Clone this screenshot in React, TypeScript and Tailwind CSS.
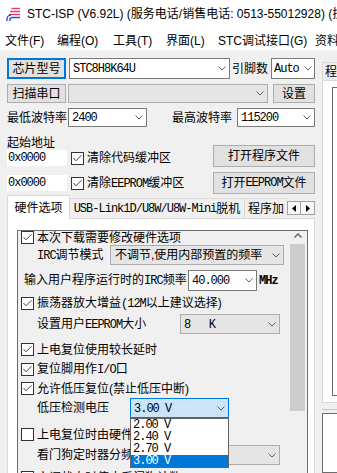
import type { ReactNode } from "react";

const SANS = "font-['Liberation_Sans','Noto_Sans_CJK_SC',sans-serif]";

// SimSun-looking latin runs (bitmap mono in the original)
function M({ children }: { children: ReactNode }) {
  return (
    <span className="font-['Liberation_Mono',monospace] text-[12px] tracking-[-1px] whitespace-pre">
      {children}
    </span>
  );
}

function Chevron({ up }: { up?: boolean }) {
  return (
    <svg width="8" height="5" viewBox="0 0 8 5" className="shrink-0">
      <polyline
        points={up ? "0.5,4.5 4,1 7.5,4.5" : "0.5,0.5 4,4 7.5,0.5"}
        fill="none"
        stroke="#606060"
        strokeWidth={up ? 1.4 : 1}
      />
    </svg>
  );
}

function Check({ on }: { on?: boolean }) {
  return (
    <span className="w-[13px] h-[13px] border border-[#333333] bg-white flex items-center justify-center shrink-0">
      {on && (
        <svg width="11" height="11" viewBox="0 0 11 11">
          <polyline points="1.5,5 4,7.8 9.5,2.2" fill="none" stroke="#444444" strokeWidth="1" />
        </svg>
      )}
    </span>
  );
}

function Button({ className, children }: { className: string; children: ReactNode }) {
  return (
    <div className={`flex items-center justify-center whitespace-nowrap bg-[#e1e1e1] ${className}`}>
      {children}
    </div>
  );
}

type Tone = "edit" | "list" | "focus";

function Combo({
  className,
  tone,
  narrow,
  children,
}: {
  className: string;
  tone: Tone;
  narrow?: boolean;
  children?: ReactNode;
}) {
  const look =
    tone === "edit"
      ? "bg-white border-[#7a7a7a]"
      : tone === "focus"
        ? "bg-[#cce4f7] border-[#0078d7]"
        : "bg-[#e5e5e5] border-[#adadad]";
  return (
    <div className={`relative flex items-center border shrink-0 ${look} ${className}`}>
      <div className={`flex-1 whitespace-nowrap overflow-hidden leading-none ${narrow ? "pl-[2px]" : "pl-[3px]"}`}>
        {children}
      </div>
      <div className={`flex justify-center shrink-0 ${narrow ? "w-[12px]" : "w-[15px]"}`}>
        <Chevron />
      </div>
    </div>
  );
}

function CheckRow({ on, className, children }: { on?: boolean; className: string; children: ReactNode }) {
  return (
    <div className={`h-[13px] flex items-center pl-[3px] whitespace-nowrap ${className}`}>
      <Check on={on} />
      <span className="ml-[3px] leading-none">{children}</span>
    </div>
  );
}

function Logo() {
  return (
    <svg width="16" height="16" viewBox="0 0 16 16" className="shrink-0">
      <g stroke="#e8356d" strokeWidth="1.4" fill="none">
        <path d="M6.5 2.5h8.5" />
        <path d="M5 5.5h10" />
        <path d="M4 8.5h11" />
      </g>
      <g stroke="#2b4fd1" strokeWidth="1.4" fill="none">
        <path d="M2 15v-2a4 4 0 0 1 4-4" />
        <path d="M5 15v-1.5a2 2 0 0 1 2-2h8" />
      </g>
    </svg>
  );
}

function TitleBar() {
  return (
    <div className="h-[28px] bg-white flex items-center pl-[5px] whitespace-nowrap overflow-hidden">
      <Logo />
      <span className="ml-[6px] leading-[16px]">
        STC-ISP (V6.92L) (服务电话/销售电话: 0513-55012928) (技术支持
      </span>
    </div>
  );
}

function MenuBar() {
  return (
    <div className="h-[22px] pt-[3px] bg-white flex items-center pl-[5px] whitespace-nowrap overflow-hidden">
      <span className="w-[52px] shrink-0">文件(F)</span>
      <span className="w-[56px] shrink-0">编程(O)</span>
      <span className="w-[53px] shrink-0">工具(T)</span>
      <span className="w-[52px] shrink-0">界面(L)</span>
      <span className="w-[97px] shrink-0">STC调试接口(G)</span>
      <span className="shrink-0">资料</span>
    </div>
  );
}

function Addr({ label }: { label: ReactNode }) {
  return (
    <div className="h-[16px] flex items-center whitespace-nowrap">
      <div className="w-[60px] h-[16px] bg-white pl-[1px] flex items-center">
        <M>0x0000</M>
      </div>
      <span className="ml-[4px]">
        <Check on />
      </span>
      <span className="ml-[3px] leading-none">{label}</span>
    </div>
  );
}

const VOLTS = ["2.00 V", "2.40 V", "2.70 V", "3.00 V"];

function HardwareBox() {
  return (
    <div className="ml-[9px] mt-[11px] w-[291px] h-[300px] border border-[#6d6d6d] bg-[#f0f0f0] flex">
      <div className="w-[271px] flex flex-col shrink-0">
        <CheckRow on className="">
          本次下载需要修改硬件选项
        </CheckRow>

        <div className="mt-[1px] h-[20px] flex items-center pl-[19px]">
          <span className="w-[73px] shrink-0 whitespace-nowrap">
            <M>IRC</M>调节模式
          </span>
          <Combo tone="list" className="w-[174px] h-[20px] pl-[1px]">
            不调节,使用内部预置的频率
          </Combo>
        </div>

        <div className="mt-[5px] h-[21px] flex items-center pl-[6px] whitespace-nowrap">
          <span className="w-[164px] shrink-0">
            输入用户程序运行时的<M>IRC</M>频率
          </span>
          <Combo tone="edit" className="w-[69px] h-[21px]">
            <M>40.000</M>
          </Combo>
          <span className="ml-[2px] font-bold">
            <M>MHz</M>
          </span>
        </div>

        <CheckRow on className="mt-[6px]">
          振荡器放大增益<M>(12M</M>以上建议选择)
        </CheckRow>

        <div className="mt-[4px] h-[20px] flex items-center pl-[19px]">
          <span className="w-[143px] shrink-0 whitespace-nowrap">
            设置用户<M>EEPROM</M>大小
          </span>
          <Combo tone="list" className="w-[100px] h-[20px]">
            <M>8   K</M>
          </Combo>
        </div>

        <CheckRow on className="mt-[9px]">
          上电复位使用较长延时
        </CheckRow>
        <CheckRow on className="mt-[7px]">
          复位脚用作<M>I/O</M>口
        </CheckRow>
        <CheckRow on className="mt-[6px]">
          允许低压复位(禁止低压中断)
        </CheckRow>

        <div className="mt-[3px] h-[20px] flex items-center pl-[19px]">
          <span className="w-[93px] shrink-0 whitespace-nowrap">低压检测电压</span>
          <div className="relative">
            <Combo tone="focus" className="w-[99px] h-[20px]">
              <M>3.00 V</M>
            </Combo>
            {/* open drop-down list */}
            <div className="absolute left-0 top-full z-20 w-[99px] bg-white border border-[#646464] flex flex-col">
              {VOLTS.map((v) => (
                <div
                  key={v}
                  className={`h-[12px] pl-[2px] flex items-center leading-none overflow-hidden ${
                    v === "3.00 V" ? "bg-[#0078d7] text-white" : ""
                  }`}
                >
                  <M>{v}</M>
                </div>
              ))}
            </div>
          </div>
        </div>

        <CheckRow className="mt-[10px]">上电复位时由硬件启动看门狗</CheckRow>

        <div className="mt-[4px] h-[20px] flex items-center pl-[19px]">
          <span className="w-[143px] shrink-0 whitespace-nowrap overflow-hidden">看门狗定时器分频系数</span>
          <Combo tone="list" className="w-[100px] h-[20px]">
            <M>256</M>
          </Combo>
        </div>

        <CheckRow on className="mt-[6px]">
          空闲状态时停止看门狗计数
        </CheckRow>
      </div>

      <div className="w-[17px] flex flex-col items-center shrink-0">
        <div className="h-[13px] pt-[2px] flex justify-center">
          <Chevron up />
        </div>
        <div className="w-[15px] h-[167px] bg-[#cdcdcd]" />
      </div>
    </div>
  );
}

function LeftPanel() {
  return (
    <div className="ml-[7px] w-[308px] flex flex-col shrink-0">
      <div className="mt-[8px] h-[21px] flex">
        <Button className="w-[59px] border-2 border-[#0078d7]">芯片型号</Button>
        <Combo tone="edit" className="ml-[3px] w-[161px]">
          <M>STC8H8K64U</M>
        </Combo>
        <span className="ml-[2px] w-[36px] flex items-center whitespace-nowrap">引脚数</span>
        <Combo tone="edit" narrow className="ml-[3px] w-[44px]">
          <M>Auto</M>
        </Combo>
      </div>

      <div className="mt-[5px] h-[19px] flex">
        <Button className="w-[59px] border border-[#adadad]">扫描串口</Button>
        <Combo tone="list" className="ml-[2px] w-[200px]" />
        <Button className="ml-[5px] w-[42px] border border-[#adadad]">设置</Button>
      </div>

      <div className="mt-[5px] h-[19px] flex items-center whitespace-nowrap">
        <span className="w-[61px] shrink-0">最低波特率</span>
        <Combo tone="edit" className="w-[79px] h-[19px]">
          <M>2400</M>
        </Combo>
        <span className="ml-[25px] w-[61px] shrink-0">最高波特率</span>
        <Combo tone="edit" className="ml-[4px] w-[78px] h-[19px]">
          <M>115200</M>
        </Combo>
      </div>

      <div className="mt-[4px] flex">
        <div className="w-[206px] flex flex-col">
          <span className="mt-[5px] h-[14px] leading-[14px]">起始地址</span>
          <Addr label="清除代码缓冲区" />
          <div className="mt-[9px]">
            <Addr
              label={
                <>
                  清除<M>EEPROM</M>缓冲区
                </>
              }
            />
          </div>
        </div>
        <div className="ml-auto w-[102px] flex flex-col">
          <Button className="mt-[14px] h-[22px] border border-[#adadad]">打开程序文件</Button>
          <Button className="mt-[5px] h-[22px] border border-[#adadad]">
            打开<M>EEPROM</M>文件
          </Button>
        </div>
      </div>

      <div className="mt-[1px] h-[23px] flex items-end whitespace-nowrap">
        <div className="relative z-10 -mb-px w-[63px] h-[24px] bg-white border border-b-0 border-[#d9d9d9] flex items-center justify-center shrink-0">
          硬件选项
        </div>
        <div className="w-[175px] h-[20px] bg-[#f0f0f0] border border-l-0 border-b-0 border-[#d9d9d9] flex items-center justify-center shrink-0">
          <M>USB-Link1D/U8W/U8W-Mini</M>脱机
        </div>
        <div className="w-[42px] h-[20px] bg-[#f0f0f0] border-t border-[#d9d9d9] pl-[3px] flex items-center overflow-hidden shrink-0">
          程序加
        </div>
        <div className="self-start mt-[6px] w-[28px] h-[14px] flex shrink-0">
          <div className="w-[14px] h-[14px] border border-[#a0a0a0] bg-[#f7f7f7] flex items-center justify-center">
            <svg width="4" height="7" viewBox="0 0 4 7">
              <polygon points="4,0 0,3.5 4,7" fill="#000" />
            </svg>
          </div>
          <div className="w-[14px] h-[14px] border border-l-0 border-[#a0a0a0] bg-[#f7f7f7] flex items-center justify-center">
            <svg width="4" height="7" viewBox="0 0 4 7">
              <polygon points="0,0 4,3.5 0,7" fill="#000" />
            </svg>
          </div>
        </div>
      </div>

      <div className="h-[260px] bg-white border border-[#d9d9d9]">
        <HardwareBox />
      </div>
    </div>
  );
}

function RightPanel() {
  return (
    <div className="ml-[7px] w-[200px] flex flex-col shrink-0">
      <div className="mt-[12px] w-[60px] h-[18px] bg-[#f0f0f0] border border-b-0 border-[#d9d9d9] pl-[2px] flex items-center whitespace-nowrap">
        程序文件
      </div>
      <div className="h-[323px] bg-white border border-[#d9d9d9]">
        <div className="ml-[9px] mt-[6px] h-[309px] border border-[#6d6d6d] bg-white" />
      </div>
      <div className="mt-[6px] h-px bg-[#a8d0f0]" />
      <div className="mt-[3px] h-[60px] border border-[#6d6d6d] bg-white" />
    </div>
  );
}

export default function App() {
  return (
    <div className={`w-[337px] h-[473px] overflow-hidden bg-[#f0f0f0] text-black text-[12px] ${SANS}`}>
      <TitleBar />
      <MenuBar />
      <div className="flex">
        <LeftPanel />
        <RightPanel />
      </div>
    </div>
  );
}
